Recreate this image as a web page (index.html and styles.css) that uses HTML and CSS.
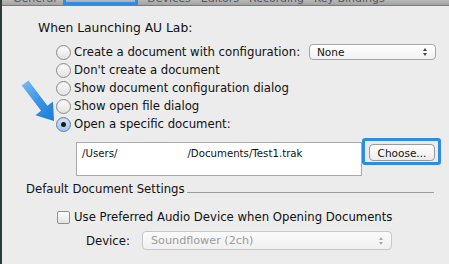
FILE: index.html
```html
<!DOCTYPE html>
<html lang="en">
<head>
    <meta charset="UTF-8">
    <meta name="viewport" content="width=device-width, initial-scale=1.0">
    <title>AU Lab Preferences - Document</title>
    <link rel="stylesheet" href="styles.css">
</head>
<body>

    <!-- Toolbar tabs (only the bottom of the labels is visible) -->
    <div class="tabbar">
        <span class="tab">General</span>
        <span class="tab tab-active">Document</span>
        <span class="tab">Devices</span>
        <span class="tab">Editors</span>
        <span class="tab">Recording</span>
        <span class="tab">Key Bindings</span>
    </div>

    <main class="prefs">
        <section class="launch">
            <h2 class="group-title">When Launching AU Lab:</h2>
            <ul class="choices">
                <li class="choice">
                    <span class="radio"></span>
                    <span class="choice-text">Create a document with configuration:</span>
                    <span class="popup popup-config">None<span class="popup-arrows"></span></span>
                </li>
                <li class="choice"><span class="radio"></span><span class="choice-text">Don't create a document</span></li>
                <li class="choice"><span class="radio"></span><span class="choice-text">Show document configuration dialog</span></li>
                <li class="choice"><span class="radio"></span><span class="choice-text">Show open file dialog</span></li>
                <li class="choice"><span class="radio radio-on"></span><span class="choice-text">Open a specific document:</span></li>
            </ul>

            <div class="file-row">
                <div class="path-field">/Users/<span class="blank"></span>/Documents/Test1.trak</div>
                <div class="focus-ring"><button class="btn">Choose...</button></div>
            </div>
        </section>

        <section class="defaults">
            <div class="section-head">
                <span class="section-title">Default Document Settings</span>
                <span class="rule"></span>
            </div>
            <div class="check-row">
                <span class="checkbox"></span>
                <span>Use Preferred Audio Device when Opening Documents</span>
            </div>
            <div class="device-row">
                <span class="device-label">Device:</span>
                <span class="popup popup-device">Soundflower (2ch)<span class="popup-arrows"></span></span>
            </div>
        </section>
    </main>

    <!-- Callout arrow pointing at the selected option -->
    <svg class="callout" width="36" height="44" viewBox="0 0 36 44">
        <defs>
            <linearGradient id="arrowFill" x1="0" y1="0" x2="1" y2="1">
                <stop offset="0" stop-color="#7dbcf2"/>
                <stop offset="0.5" stop-color="#3a95e6"/>
                <stop offset="1" stop-color="#1c7bd6"/>
            </linearGradient>
        </defs>
        <polygon points="7.4,0.4 26.4,25.8 32,21.4 33,41 14.4,35.2 20.1,30.8 0.7,5.6" fill="url(#arrowFill)"/>
    </svg>

</body>
</html>
```

FILE: styles.css
```css
/* Mac style preference pane */
body {
    margin: 0;
    width: 447px;
    height: 264px;
    overflow: hidden;
    position: relative;
    font-family: "DejaVu Sans", Verdana, sans-serif;
    font-size: 11.7px;
    color: #111;
    background-color: #ececec;
    border-left: 2px solid #2f3b3b;
}
.tabbar {
    display: flex;
    height: 5px;
    overflow: hidden;
    align-items: flex-end;
    background: linear-gradient(#b8b8b8, #a2a2a2);
    border-bottom: 1px solid #7d7d7d;
    padding-left: 6px;
}
.tab {
    font-size: 11px;
    line-height: 11px;
    margin-bottom: 1px;
    padding: 0 5px;
    color: #555;
    white-space: nowrap;
}
.tab-active {
    margin: 0 4px 0 2px;
    padding: 0 6px;
    border: 3px solid #2f8ce6;
    border-top: none;
    color: #333;
}

/* Launch options */
.launch {
    padding: 14px 0 0 36px;
}
.group-title {
    margin: 0;
    font-size: 12.3px;
    font-weight: normal;
    line-height: 16px;
}
.choices {
    list-style: none;
    margin: 7px 0 0 18px;
    padding: 0;
}
.choice {
    display: flex;
    align-items: center;
    height: 18px;
    white-space: nowrap;
}
.radio {
    width: 13px;
    height: 13px;
    border: 1px solid #8c8c8c;
    border-radius: 50%;
    background: linear-gradient(#fdfdfd, #e2e2e2);
    box-shadow: inset 0 1px 1px rgba(0, 0, 0, 0.08);
    margin-right: 3px;
    position: relative;
    flex: none;
}
.radio-on {
    border-color: #5f7fa6;
    background: linear-gradient(#d3e7fb, #9cc6ef);
}
.radio-on::after {
    content: "";
    position: absolute;
    left: 4px;
    top: 4px;
    width: 5px;
    height: 5px;
    border-radius: 50%;
    background-color: #1a1a1a;
}
.popup {
    position: relative;
    display: flex;
    align-items: center;
    box-sizing: border-box;
    border: 1px solid #a5a5a5;
    border-radius: 4px;
    background: linear-gradient(#ffffff, #f1f1f1);
    font-size: 10.5px;
    flex: none;
}
.popup-config {
    width: 127px;
    height: 16px;
    margin-left: auto;
    margin-right: 13px;
    padding-left: 7px;
}
.popup-arrows {
    position: absolute;
    right: 7px;
    top: 50%;
    margin-top: -4px;
    width: 5px;
    height: 8px;
}
.popup-arrows::before,
.popup-arrows::after {
    content: "";
    position: absolute;
    left: 0;
    border-left: 2.5px solid transparent;
    border-right: 2.5px solid transparent;
}
.popup-arrows::before {
    top: 0;
    border-bottom: 3px solid #444;
}
.popup-arrows::after {
    bottom: 0;
    border-top: 3px solid #444;
}

/* Path field and Choose button */
.file-row {
    display: flex;
    align-items: flex-start;
    margin: 5px 0 0 38px;
}
.path-field {
    box-sizing: border-box;
    width: 286px;
    height: 34px;
    margin-top: 4px;
    padding: 4px 0 0 5px;
    background-color: #fff;
    border: 1px solid #a9a9a9;
    font-size: 10.2px;
    line-height: 13px;
}
.blank {
    display: inline-block;
    width: 70px;
}
.focus-ring {
    border: 3px solid #2f8ce6;
    border-radius: 3px;
    padding: 3px 3px 1px 4px;
}
.btn {
    display: block;
    width: 66px;
    height: 17px;
    padding: 0;
    font-family: inherit;
    font-size: 10.5px;
    color: #111;
    border: 1px solid #9a9a9a;
    border-radius: 4px;
    background: linear-gradient(#ffffff, #ececec);
}

/* Default document settings */
.defaults {
    padding: 5px 0 0 24px;
}
.section-head {
    display: flex;
    align-items: center;
    width: 408px;
    line-height: 16px;
}
.rule {
    flex: 1;
    height: 1px;
    margin: 7px 0 0 2px;
    background-color: #9b9b9b;
}
.check-row {
    display: flex;
    align-items: center;
    height: 18px;
    margin: 11px 0 0 31px;
}
.checkbox {
    width: 11px;
    height: 11px;
    border: 1px solid #8f8f8f;
    border-radius: 2px;
    background: linear-gradient(#fdfdfd, #e4e4e4);
    margin-right: 4px;
    flex: none;
}
.device-row {
    display: flex;
    align-items: center;
    margin: 5px 0 0 60px;
}
.device-label {
    width: 56px;
}
.popup-device {
    width: 250px;
    height: 19px;
    padding-left: 8px;
    font-size: 11.2px;
    color: #9a9a9a;
    border-color: #c8c8c8;
    background: linear-gradient(#fafafa, #f0f0f0);
}
.popup-device .popup-arrows::before {
    border-bottom-color: #aaa;
}
.popup-device .popup-arrows::after {
    border-top-color: #aaa;
}

/* Tutorial callout arrow */
.callout {
    position: absolute;
    left: 19px;
    top: 80px;
}
```
